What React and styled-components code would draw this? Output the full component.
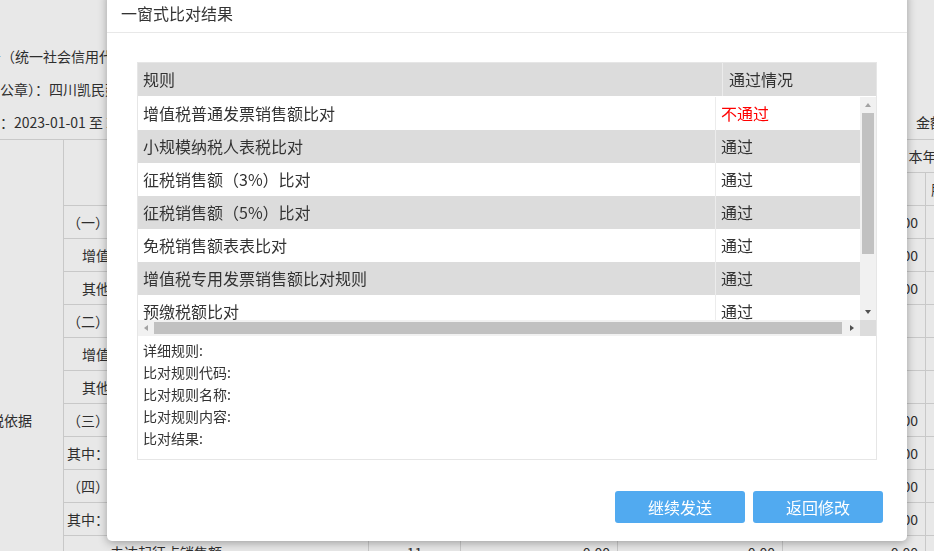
import React from "react";
import styled, { createGlobalStyle } from "styled-components";

const GlobalStyle = createGlobalStyle`
  html, body { margin: 0; padding: 0; overflow: hidden; background: #fff; }
  body { font-family: "Microsoft YaHei", "Noto Sans CJK SC", sans-serif; color: #333; }
  * { box-sizing: border-box; }
`;

/* ---------- background page ---------- */
const Page = styled.div`
  width: 1130px;
  margin-left: -40px;
  padding-top: 40px;
  font-size: 14px;
  color: #333;
`;

const InfoLine = styled.div`
  display: flex;
  height: 33px;
  line-height: 33px;
  white-space: nowrap;
  margin-left: ${(p) => p.$shift}px;
`;

const UnitNote = styled.span`
  margin-left: auto;
  padding-right: 6px;
`;

const BgTable = styled.table`
  border-collapse: collapse;
  table-layout: fixed;
  width: 1130px;
`;

const Th = styled.th`
  border: 1px solid #dcdcdc;
  height: 33px;
  padding: 0;
  font-weight: normal;
  text-align: center;
  white-space: nowrap;
  overflow: hidden;
`;

const GroupCell = styled.td`
  border: 1px solid #dcdcdc;
  padding: 0 0 0 15px;
  vertical-align: middle;
  white-space: nowrap;
`;

const Td = styled.td`
  border: 1px solid #dcdcdc;
  height: 33px;
  padding: 0 7px 0 ${(p) => p.$indent ?? 4}px;
  text-align: ${(p) => p.$align || "left"};
  white-space: nowrap;
  overflow: hidden;
`;

/* ---------- mask + modal ---------- */
const Mask = styled.div`
  position: fixed;
  inset: 0;
  background: rgba(0, 0, 0, 0.09);
`;

const Modal = styled.div`
  position: fixed;
  top: -10px;
  left: 107px;
  width: 800px;
  background: #fff;
  border-radius: 5px;
  box-shadow: 0 2px 10px rgba(0, 0, 0, 0.32);
  display: flex;
  flex-direction: column;
`;

const ModalHeader = styled.div`
  height: 43px;
  padding: 12px 0 0 14px;
  border-bottom: 1px solid #e8e8e8;
  font-size: 16px;
  line-height: 22px;
  color: #333;
`;

const ModalBody = styled.div`
  padding: 29px 30px 0;
`;

const ResultBox = styled.div`
  height: 398px;
  border: 1px solid #e6e6e6;
  display: flex;
  flex-direction: column;
`;

const TableHead = styled.div`
  display: grid;
  grid-template-columns: 584px 1fr;
  height: 33px;
  margin-bottom: 1px;
  background: #dcdcdc;
  font-size: 16px;
  line-height: 33px;
  color: #333;
`;

const HeadCell = styled.div`
  padding-left: ${(p) => (p.$divider ? 6 : 5)}px;
  border-left: ${(p) => (p.$divider ? "1px solid #ececec" : "none")};
`;

const ScrollArea = styled.div`
  display: grid;
  grid-template-columns: 1fr 16px;
  grid-template-rows: 223px 16px;
`;

const Viewport = styled.div`
  overflow: hidden;
`;

const Row = styled.div`
  display: grid;
  grid-template-columns: 577px 1fr;
  height: 33px;
  background: ${(p) => (p.$alt ? "#dcdcdc" : "#fff")};
  font-size: 16px;
  line-height: 33px;
`;

const Cell = styled.div`
  padding-left: 5px;
  white-space: nowrap;
  overflow: hidden;
  color: ${(p) => (p.$fail ? "#f00" : "#333")};
  border-left: ${(p) => (p.$divider ? "1px solid #ececec" : "none")};
`;

const VScroll = styled.div`
  background: #f1f1f1;
  display: flex;
  flex-direction: column;
`;

const HScroll = styled.div`
  background: #f1f1f1;
  display: flex;
`;

const ArrowBtn = styled.div`
  flex: 0 0 16px;
  width: 16px;
  height: 16px;
  display: flex;
  align-items: center;
  justify-content: center;
`;

const Triangle = styled.span`
  width: 0;
  height: 0;
  ${({ $dir, $dim }) => {
    const c = $dim ? "#a3a3a3" : "#505050";
    if ($dir === "up")
      return `border-left:3.5px solid transparent;border-right:3.5px solid transparent;border-bottom:4px solid ${c};`;
    if ($dir === "down")
      return `border-left:3.5px solid transparent;border-right:3.5px solid transparent;border-top:4px solid ${c};`;
    if ($dir === "left")
      return `border-top:3.5px solid transparent;border-bottom:3.5px solid transparent;border-right:4px solid ${c};`;
    return `border-top:3.5px solid transparent;border-bottom:3.5px solid transparent;border-left:4px solid ${c};`;
  }}
`;

const VThumb = styled.div`
  height: 141px;
  margin: 0 2px;
  background: #c1c1c1;
`;

const HThumb = styled.div`
  flex: 1;
  margin: 2px 2px 2px 0;
  background: #c1c1c1;
`;

const Spacer = styled.div`
  flex: 1;
`;

const Corner = styled.div`
  background: #dcdcdc;
`;

const Detail = styled.div`
  flex: 1;
  padding: 3px 5px 0;
  font-size: 14px;
  line-height: 22px;
  color: #333;
`;

const Footer = styled.div`
  display: flex;
  justify-content: flex-end;
  gap: 8px;
  padding: 31px 24px 18px;
`;

const Button = styled.button`
  width: 130px;
  height: 32px;
  border: none;
  border-radius: 3px;
  background: #51aaf0;
  color: #fff;
  font-family: inherit;
  font-size: 16px;
  padding: 0;
  cursor: pointer;
`;

const rules = [
  ["增值税普通发票销售额比对", "不通过"],
  ["小规模纳税人表税比对", "通过"],
  ["征税销售额（3%）比对", "通过"],
  ["征税销售额（5%）比对", "通过"],
  ["免税销售额表表比对", "通过"],
  ["增值税专用发票销售额比对规则", "通过"],
  ["预缴税额比对", "通过"],
  ["本期应纳税额比对", "通过"],
  ["附列资料比对", "通过"],
];

const details = ["详细规则:", "比对规则代码:", "比对规则名称:", "比对规则内容:", "比对结果:"];

const bgRows = [
  ["（一）应征增值税不含税销售额（3%征收率）", 3, true],
  ["增值税专用发票不含税销售额", 18, true],
  ["其他增值税发票不含税销售额", 18, true],
  ["（二）应征增值税不含税销售额（5%征收率）", 3, false],
  ["增值税专用发票不含税销售额", 18, false],
  ["其他增值税发票不含税销售额", 18, false],
  ["（三）销售使用过的固定资产不含税销售额", 3, true],
  ["其中：其他增值税发票不含税销售额", 3, true],
  ["（四）免税销售额", 3, true],
  ["其中：小微企业免税销售额", 3, true],
  ["未达起征点销售额", 46, true],
  ["其他免税销售额", 46, true],
  ["（五）出口免税销售额", 3, true],
  ["其中：其他增值税发票不含税销售额", 3, true],
  ["（六）其他", 3, true],
];

export default function App() {
  return (
    <>
      <GlobalStyle />
      <Page>
        <InfoLine $shift={-43}>纳税人识别号（统一社会信用代码）：91510107MA62XXXX5K</InfoLine>
        <InfoLine $shift={-44}>纳税人名称（公章）：四川凯民建筑工程有限公司</InfoLine>
        <InfoLine $shift={-30}>
          <span>税款所属期：2023-01-01 至 2023-03-31</span>
          <UnitNote>金额单位：元（列至角分）</UnitNote>
        </InfoLine>
        <BgTable>
          <colgroup>
            <col style={{ width: 103 }} />
            <col style={{ width: 305 }} />
            <col style={{ width: 92 }} />
            <col style={{ width: 157 }} />
            <col style={{ width: 165 }} />
            <col style={{ width: 143 }} />
            <col style={{ width: 165 }} />
          </colgroup>
          <tbody>
            <tr>
              <GroupCell rowSpan={17}>计税依据</GroupCell>
              <Th rowSpan={2}>项目</Th>
              <Th rowSpan={2}>栏次</Th>
              <Th colSpan={2}>本期数</Th>
              <Th colSpan={2}>本年累计</Th>
            </tr>
            <tr>
              <Th>货物及劳务</Th>
              <Th>服务、不动产和无形资产</Th>
              <Th>货物及劳务</Th>
              <Th>服务、不动产和无形资产</Th>
            </tr>
            {bgRows.map(([label, indent, filled], i) => (
              <tr key={i}>
                <Td $indent={indent}>{label}</Td>
                <Td $align="center" $indent={7}>{i + 1}</Td>
                <Td $align="right">0.00</Td>
                <Td $align="right">0.00</Td>
                <Td $align="right">{filled ? "0.00" : ""}</Td>
                <Td $align="right">0.00</Td>
              </tr>
            ))}
          </tbody>
        </BgTable>
      </Page>

      <Mask />

      <Modal>
        <ModalHeader>一窗式比对结果</ModalHeader>
        <ModalBody>
          <ResultBox>
            <TableHead>
              <HeadCell>规则</HeadCell>
              <HeadCell $divider>通过情况</HeadCell>
            </TableHead>
            <ScrollArea>
              <Viewport>
                {rules.map(([name, status], i) => (
                  <Row key={i} $alt={i % 2 === 1}>
                    <Cell>{name}</Cell>
                    <Cell $divider $fail={status === "不通过"}>{status}</Cell>
                  </Row>
                ))}
              </Viewport>
              <VScroll>
                <ArrowBtn><Triangle $dir="up" $dim /></ArrowBtn>
                <VThumb />
                <Spacer />
                <ArrowBtn><Triangle $dir="down" /></ArrowBtn>
              </VScroll>
              <HScroll>
                <ArrowBtn><Triangle $dir="left" $dim /></ArrowBtn>
                <HThumb />
                <ArrowBtn><Triangle $dir="right" /></ArrowBtn>
              </HScroll>
              <Corner />
            </ScrollArea>
            <Detail>
              {details.map((d) => (
                <div key={d}>{d}</div>
              ))}
            </Detail>
          </ResultBox>
        </ModalBody>
        <Footer>
          <Button>继续发送</Button>
          <Button>返回修改</Button>
        </Footer>
      </Modal>
    </>
  );
}
